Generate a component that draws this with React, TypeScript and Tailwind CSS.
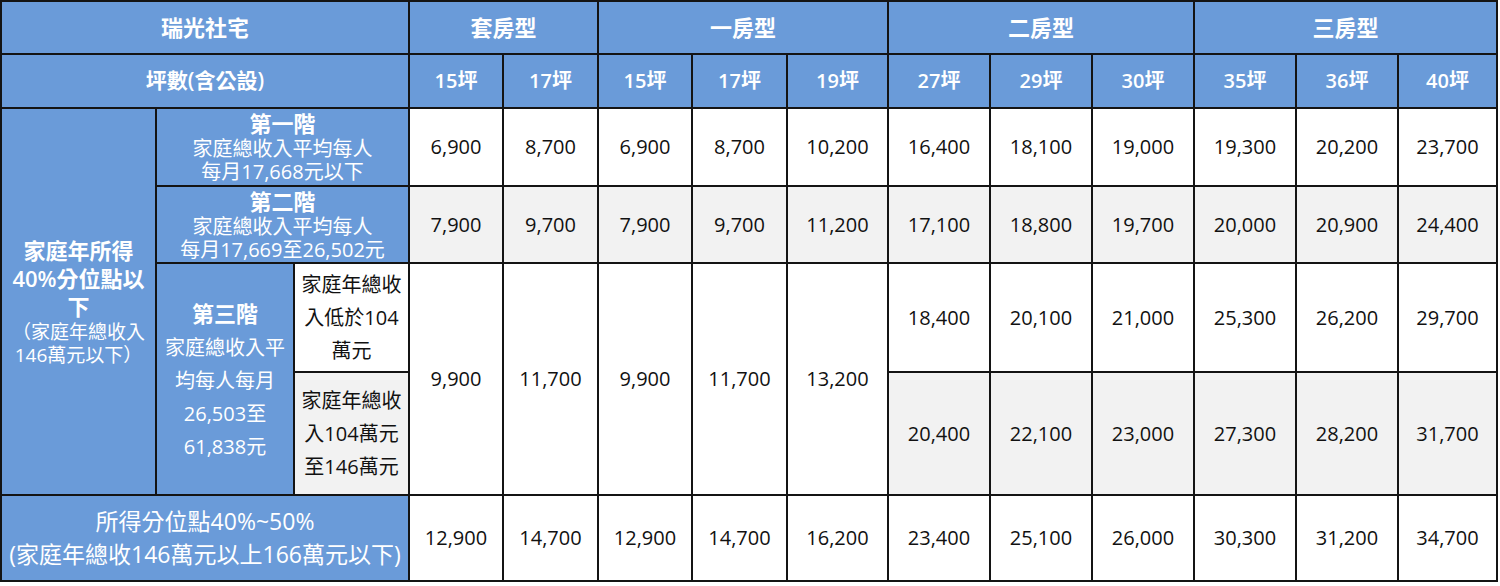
const FONT = "font-['Open_Sans','Noto_Sans_CJK_TC',sans-serif]";

const HEAD = "bg-[#6a9bd9] text-white flex items-center justify-center text-center";
const CELL = "flex items-center justify-center text-[20px] text-[#111]";

const sizes = ["15坪", "17坪", "15坪", "17坪", "19坪", "27坪", "29坪", "30坪", "35坪", "36坪", "40坪"];

const tier1 = ["6,900", "8,700", "6,900", "8,700", "10,200", "16,400", "18,100", "19,000", "19,300", "20,200", "23,700"];
const tier2 = ["7,900", "9,700", "7,900", "9,700", "11,200", "17,100", "18,800", "19,700", "20,000", "20,900", "24,400"];
const tier3Merged = ["9,900", "11,700", "9,900", "11,700", "13,200"];
const tier3a = ["18,400", "20,100", "21,000", "25,300", "26,200", "29,700"];
const tier3b = ["20,400", "22,100", "23,000", "27,300", "28,200", "31,700"];
const bottom = ["12,900", "14,700", "12,900", "14,700", "16,200", "23,400", "25,100", "26,000", "30,300", "31,200", "34,700"];

export default function App() {
  return (
    <div className={`bg-white w-[1500px] h-[586px] ${FONT}`}>
      <div className="grid w-[1498px] bg-[#141414] p-[2px] gap-[2px] grid-cols-[153px_136px_113px_92px_93px_92px_93px_99px_100px_100px_100px_100px_100px_97px] grid-rows-[51px_52px_76px_75px_107px_121px_84px]">
        {/* header row 1 */}
        <div className={`${HEAD} col-span-3 text-[22px] font-semibold`}>瑞光社宅</div>
        <div className={`${HEAD} col-span-2 text-[22px] font-semibold`}>套房型</div>
        <div className={`${HEAD} col-span-3 text-[22px] font-semibold`}>一房型</div>
        <div className={`${HEAD} col-span-3 text-[22px] font-semibold`}>二房型</div>
        <div className={`${HEAD} col-span-3 text-[22px] font-semibold`}>三房型</div>

        {/* header row 2 */}
        <div className={`${HEAD} col-span-3 text-[21px] font-semibold`}>坪數(含公設)</div>
        {sizes.map((s, i) => (
          <div key={i} className={`${HEAD} text-[20px] font-semibold`}>{s}</div>
        ))}

        {/* tier block label */}
        <div className={`${HEAD} row-span-4 flex-col`}>
          <div className="text-[22px] font-semibold leading-[28px]">
            家庭年所得<br />40%分位點以<br />下
          </div>
          <div className="text-[19px] leading-[23px] mt-[1px]">
            （家庭年總收入<br />146萬元以下）
          </div>
        </div>

        {/* tier 1 */}
        <div className={`${HEAD} col-span-2 flex-col`}>
          <div className="text-[22px] font-semibold leading-[24px] mb-[2px]">第一階</div>
          <div className="text-[20px] leading-[23px]">家庭總收入平均每人</div>
          <div className="text-[20px] leading-[23px]">每月17,668元以下</div>
        </div>
        {tier1.map((v, i) => (
          <div key={i} className={`${CELL} bg-white`}>{v}</div>
        ))}

        {/* tier 2 */}
        <div className={`${HEAD} col-span-2 flex-col`}>
          <div className="text-[22px] font-semibold leading-[24px] mb-[2px]">第二階</div>
          <div className="text-[20px] leading-[23px]">家庭總收入平均每人</div>
          <div className="text-[20px] leading-[23px]">每月17,669至26,502元</div>
        </div>
        {tier2.map((v, i) => (
          <div key={i} className={`${CELL} bg-[#f2f2f2]`}>{v}</div>
        ))}

        {/* tier 3 */}
        <div className={`${HEAD} row-span-2 flex-col`}>
          <div className="text-[22px] font-semibold leading-[36px]">第三階</div>
          <div className="text-[20px] leading-[33px]">
            家庭總收入平<br />均每人每月<br />26,503至<br />61,838元
          </div>
        </div>
        <div className={`${CELL} bg-white leading-[33px] text-center`}>
          家庭年總收<br />入低於104<br />萬元
        </div>
        {tier3Merged.map((v, i) => (
          <div key={i} className={`${CELL} bg-white row-span-2`}>{v}</div>
        ))}
        {tier3a.map((v, i) => (
          <div key={i} className={`${CELL} bg-white`}>{v}</div>
        ))}
        <div className={`${CELL} bg-[#f2f2f2] leading-[33px] text-center`}>
          家庭年總收<br />入104萬元<br />至146萬元
        </div>
        {tier3b.map((v, i) => (
          <div key={i} className={`${CELL} bg-[#f2f2f2]`}>{v}</div>
        ))}

        {/* 40%~50% */}
        <div className={`${HEAD} col-span-3 flex-col text-[23px] leading-[33px] whitespace-nowrap`}>
          <div>所得分位點40%~50%</div>
          <div>(家庭年總收146萬元以上166萬元以下)</div>
        </div>
        {bottom.map((v, i) => (
          <div key={i} className={`${CELL} bg-white`}>{v}</div>
        ))}
      </div>
    </div>
  );
}
